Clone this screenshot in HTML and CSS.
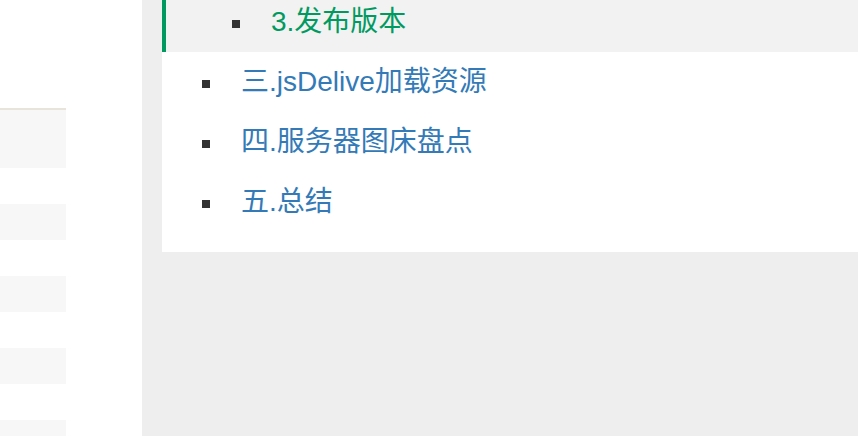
FILE: index.html
```html
<!DOCTYPE html>
<html lang="zh">
<head>
<meta charset="utf-8">
<link rel="stylesheet" href="styles.css">
</head>
<body>
<div class="page">
  <aside class="sidebar">
    <div class="side-col">
      <div class="side-block tall"></div>
      <div class="side-block"></div>
      <div class="side-block"></div>
      <div class="side-block"></div>
      <div class="side-block"></div>
    </div>
  </aside>
  <main class="main">
    <nav class="toc">
      <div class="toc-row active sub"><span class="bullet"></span><a class="toc-link">3.发布版本</a></div>
      <div class="toc-row"><span class="bullet"></span><a class="toc-link">三.jsDelive加载资源</a></div>
      <div class="toc-row"><span class="bullet"></span><a class="toc-link">四.服务器图床盘点</a></div>
      <div class="toc-row"><span class="bullet"></span><a class="toc-link">五.总结</a></div>
    </nav>
  </main>
</div>
</body>
</html>
```
FILE: styles.css
```css
html, body {
  margin: 0;
  padding: 0;
  height: 100%;
}
body {
  font-family: "Liberation Sans", "Noto Sans CJK SC", sans-serif;
  background: #eeeeee;
  overflow: hidden;
}
.page {
  display: flex;
  height: 436px;
}
.sidebar {
  width: 142px;
  flex: none;
  background: #ffffff;
}
.side-col {
  width: 66px;
  margin-top: 108px;
  border-top: 2px solid #e8e4da;
  display: flex;
  flex-direction: column;
  gap: 36px;
}
.side-block {
  height: 36px;
  background: #f7f7f7;
}
.side-block.tall {
  height: 58px;
}
.main {
  flex: 1;
  padding-left: 20px;
}
.toc {
  background: #ffffff;
  height: 252px;
  box-sizing: border-box;
}
.toc-row {
  display: flex;
  align-items: center;
  height: 60px;
  padding-left: 40px;
}
.toc-row.active {
  height: 52px;
  box-sizing: border-box;
  padding-bottom: 8px;
  background: #f2f2f2;
  border-left: 4px solid #009a61;
  padding-left: 66px;
}
.bullet {
  width: 8px;
  height: 8px;
  background: #333333;
  margin-top: 4px;
  margin-right: 31px;
  flex: none;
}
.toc-link {
  font-size: 28px;
  color: #337ab7;
  line-height: 1;
}
.active .toc-link {
  color: #009a61;
}
```
